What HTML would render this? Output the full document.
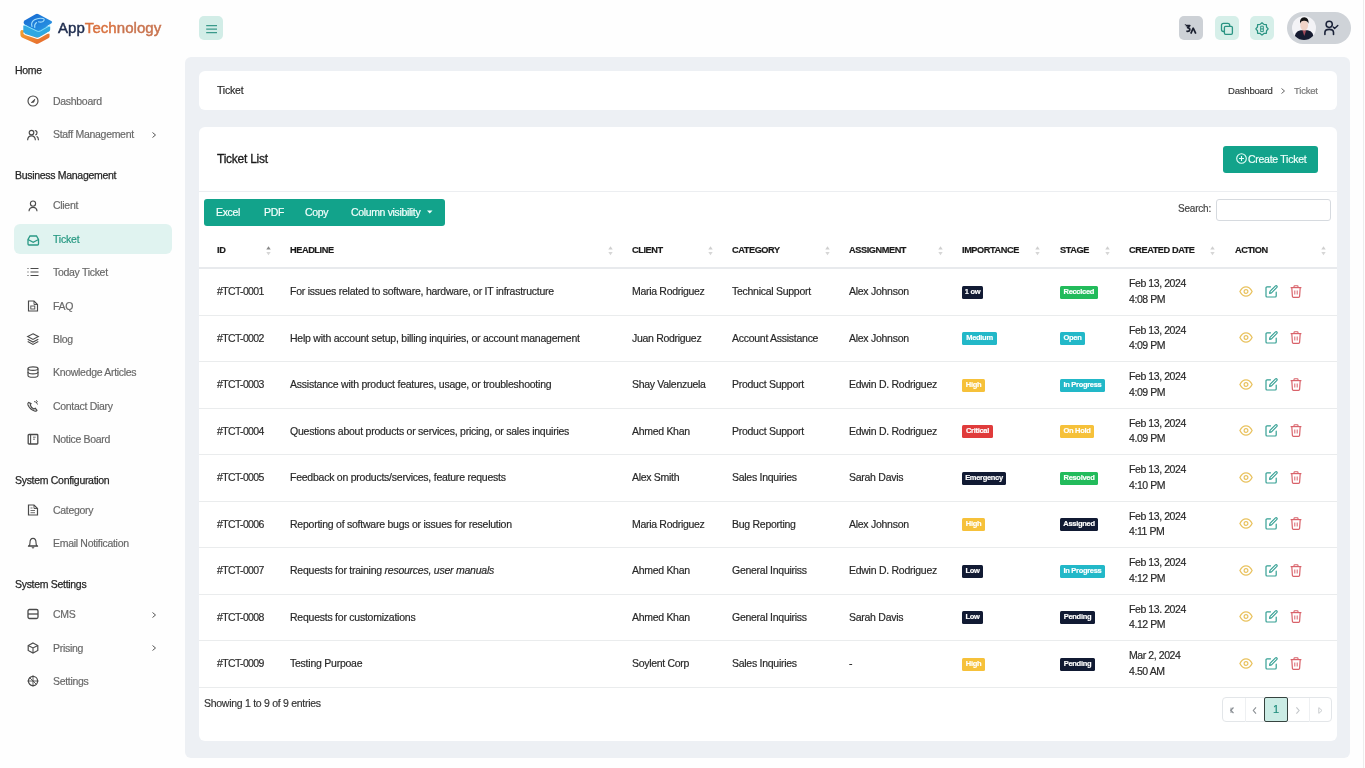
<!DOCTYPE html>
<html><head><meta charset="utf-8"><style>
*{box-sizing:border-box;margin:0;padding:0}
html,body{width:1365px;height:768px;overflow:hidden;background:#fefefe;font-family:"Liberation Sans",sans-serif;color:#333}
.abs{position:absolute}
.t{position:absolute;white-space:nowrap;will-change:transform;-webkit-text-stroke:0.18px currentColor}
svg{position:absolute;overflow:visible}
</style></head><body>
<svg style="left:0;top:0" width="60" height="50" viewBox="0 0 60 50">
  <defs>
   <linearGradient id="og" x1="0" y1="0" x2="1" y2="1"><stop offset="0" stop-color="#f3a531"/><stop offset="1" stop-color="#e5622e"/></linearGradient>
   <linearGradient id="bg1" x1="0" y1="0" x2="1" y2="1"><stop offset="0" stop-color="#1565d0"/><stop offset="1" stop-color="#2a9be6"/></linearGradient>
  </defs>
  <path d="M21.5 30 Q20 30.8 20.3 32.5 L20.5 35.5 Q20.7 36.8 22 37.4 L35.5 43.6 Q37 44.2 38.5 43.5 L48.3 38.3 Q49.6 37.6 49.6 36.2 L49.5 33.8 Z" fill="url(#og)"/>
  <path d="M23.3 25.5 L23.3 32 Q23.4 33.5 24.8 34.2 L36.5 37.6 Q38 38 39.4 37.2 L48.8 31.8 Q50.2 31 50.2 29.5 L50.2 26.5 Z" fill="#2fa8e2"/>
  <path d="M23.6 32.6 Q24 33.8 25.2 34.4 L36.5 38.2 Q38 38.6 39.4 37.8 L49 32.2" fill="none" stroke="#ffffff" stroke-width="1.1"/>
  <path d="M24.6 20.5 L35.5 14.2 Q37 13.4 38.6 14.2 L51.3 21 Q53 22 51.5 23.2 L40.5 30.3 Q38.8 31.3 37 30.6 L24.6 24.5 Q22.6 22.2 24.6 20.5 Z" fill="url(#bg1)"/>
  <path d="M24 24.8 L37.2 31.2 Q38.8 31.8 40.3 31 L50.2 25.5" fill="none" stroke="#8fe3ff" stroke-width="0.9"/>
  <path d="M32 26.5 Q30.5 22.5 34.5 19.8 Q38.5 17.5 43 18.5 Q45.5 19.5 43 21.5 Q41 22.5 38.5 21.8 M34.8 27.5 Q34 24.5 36.5 22.5" fill="none" stroke="#9fdcfb" stroke-width="1.1" stroke-linecap="round"/>
</svg>
<div class="t" style="left:57.5px;top:16px;font-size:15px;line-height:24px;font-weight:normal;letter-spacing:0.05px;-webkit-text-stroke:0.45px currentColor"><span style="color:#1e2c4e">App</span><span style="color:#d8713f">Tech</span><span style="color:#c9744f">nology</span></div>
<div class="abs" style="left:199px;top:16px;width:24px;height:24px;border-radius:5px;background:#d2ede7"></div>
<svg style="left:199px;top:16px" width="24" height="24"><path d="M7.2 9.6h10.8M7.2 13.1h10.8M7.2 16.6h10.8" stroke="#3a9a8b" stroke-width="1.35"/></svg>
<div class="abs" style="left:1179px;top:16px;width:24px;height:24px;border-radius:5px;background:#cdd1d6"></div>
<svg style="left:1179px;top:16px" width="24" height="24"><path d="M6.8 9.6 L10.8 9.6 L8.6 11.6 Q11 12 10.8 14 Q10.4 15.7 7.4 15.2" fill="none" stroke="#1a1f2e" stroke-width="1.7" stroke-linejoin="round"/><path d="M5.8 8.7 h1.2" stroke="#1a1f2e" stroke-width="0.8"/><path d="M11.8 17.6 L14.2 12.2 L16.8 17.6" fill="none" stroke="#1a1f2e" stroke-width="1.7" stroke-linejoin="round"/></svg>
<div class="abs" style="left:1215px;top:16px;width:24px;height:24px;border-radius:5px;background:#d6efe9"></div>
<svg style="left:1215px;top:16px" width="24" height="24"><rect x="6.5" y="7.3" width="8.2" height="8.2" rx="2" fill="none" stroke="#2a9483" stroke-width="1.3"/><rect x="9.4" y="10.3" width="8" height="8" rx="1.2" fill="#d6efe9" stroke="#2a9483" stroke-width="1.3"/></svg>
<div class="abs" style="left:1250px;top:16px;width:24px;height:24px;border-radius:5px;background:#d6efe9"></div>
<svg style="left:1250px;top:16px" width="24" height="24"><path d="M12.00 6.70 L13.88 8.37 L16.38 8.52 L16.53 11.02 L18.20 12.90 L16.53 14.78 L16.38 17.28 L13.88 17.43 L12.00 19.10 L10.12 17.43 L7.62 17.28 L7.47 14.78 L5.80 12.90 L7.47 11.02 L7.62 8.52 L10.12 8.37Z" fill="none" stroke="#2a9483" stroke-width="1.25" stroke-linejoin="round"/><path d="M10.7 10.2h2.6v5.4h-2.6z M10.7 12.9h2.6" fill="none" stroke="#2a9483" stroke-width="1"/></svg>
<div class="abs" style="left:1286.5px;top:12px;width:64.5px;height:32px;border-radius:16px;background:#cfd3d8"></div>
<div class="abs" style="left:1291.5px;top:16.3px;width:24px;height:24px;border-radius:50%;background:#f3f3f6;overflow:hidden"><svg style="left:0;top:0" width="24" height="24"><path d="M2.6 24 Q2 15.6 8.6 14.3 L15.8 14.3 Q22.2 15.6 21.8 24 Z" fill="#161b30"/><path d="M10.4 14.3 L12.3 20 L14.2 14.3Z" fill="#a44a5a"/><ellipse cx="12.2" cy="9.3" rx="3.9" ry="5.2" fill="#efd3c6"/><path d="M8 7.8 Q7.4 1.3 12.2 1.3 Q17 1.3 16.5 7.8 Q15.6 4.6 12.2 4.8 Q8.9 4.6 8 7.8Z" fill="#141414"/></svg></div>
<svg style="left:1322px;top:19px" width="18" height="18"><circle cx="7.2" cy="5.3" r="3.1" fill="none" stroke="#1a2238" stroke-width="1.5"/><path d="M2.9 15.4 V13.6 Q2.9 10.4 7.2 10.4 Q11.5 10.4 11.5 13.6 V15.4" fill="none" stroke="#1a2238" stroke-width="1.6" stroke-linecap="round"/><path d="M11.2 8.1 L12.6 9.4 L15.8 6.4" fill="none" stroke="#1a2238" stroke-width="1.4" stroke-linecap="round" stroke-linejoin="round"/></svg>
<div class="t" style="left:15px;top:65.14px;font-size:10.5px;line-height:10.5px;color:#262626;font-weight:normal;letter-spacing:-0.3px;-webkit-text-stroke:0.25px #262626;">Home</div>
<svg style="left:27px;top:94.9px" width="12" height="12" viewBox="0 0 12 12"><circle cx="6" cy="6" r="5" fill="none" stroke="#4a4a4a" stroke-width="1.15"/><path d="M4.3 7.5 L7.8 4.2 L6.8 7.2 Z" fill="#4a4a4a" stroke="#4a4a4a" stroke-width="0.8"/></svg>
<div class="t" style="left:53px;top:95.84px;font-size:10.5px;line-height:10.5px;color:#686868;font-weight:normal;letter-spacing:-0.3px;">Dashboard</div>
<svg style="left:27px;top:128.5px" width="12" height="12" viewBox="0 0 12 12"><circle cx="4.5" cy="3.6" r="2.3" fill="none" stroke="#4a4a4a" stroke-width="1.15"/><path d="M0.6 11.2 Q0.8 6.8 4.5 6.8 Q8.2 6.8 8.4 11.2" fill="none" stroke="#4a4a4a" stroke-width="1.15"/><path d="M7.8 1.5 Q10 1.6 10 3.7 Q10 5.6 8.2 6" fill="none" stroke="#4a4a4a" stroke-width="1.15"/><path d="M9.6 7.2 Q11.4 8 11.5 11.2" fill="none" stroke="#4a4a4a" stroke-width="1.15"/></svg>
<div class="t" style="left:53px;top:129.44px;font-size:10.5px;line-height:10.5px;color:#686868;font-weight:normal;letter-spacing:-0.3px;">Staff Management</div>
<svg style="left:151px;top:132px" width="6" height="6"><path d="M1.5 0.5 L4.5 3 L1.5 5.5" fill="none" stroke="#555" stroke-width="1"/></svg>
<div class="t" style="left:15px;top:169.74px;font-size:10.5px;line-height:10.5px;color:#262626;font-weight:normal;letter-spacing:-0.3px;-webkit-text-stroke:0.25px #262626;">Business Management</div>
<svg style="left:27px;top:199.5px" width="12" height="12" viewBox="0 0 12 12"><circle cx="6" cy="3.6" r="2.6" fill="none" stroke="#4a4a4a" stroke-width="1.15"/><path d="M2 11.3 Q2.2 7.3 6 7.3 Q9.8 7.3 10 11.3" fill="none" stroke="#4a4a4a" stroke-width="1.15"/></svg>
<div class="t" style="left:53px;top:200.44px;font-size:10.5px;line-height:10.5px;color:#686868;font-weight:normal;letter-spacing:-0.3px;">Client</div>
<div class="abs" style="left:14px;top:224px;width:158px;height:30px;border-radius:6px;background:#e0f3f0"></div>
<svg style="left:27px;top:233.5px" width="12" height="12" viewBox="0 0 12 12"><path d="M1 5.5 L1 10 Q1 11 2 11 L10.5 11 Q11.5 11 11.5 10 L11.5 5.5 L9.5 2 L3 2 Z" fill="none" stroke="#2a9985" stroke-width="1.3"/><path d="M1 5.5 L6.2 8.3 L11.5 5.5" fill="none" stroke="#2a9985" stroke-width="1.3"/></svg>
<div class="t" style="left:53px;top:233.94px;font-size:10.5px;line-height:10.5px;color:#21967f;font-weight:normal;letter-spacing:-0.2px;">Ticket</div>
<svg style="left:27px;top:266.2px" width="12" height="12" viewBox="0 0 12 12"><path d="M3.5 2.5h8M3.5 6h8M3.5 9.5h8" stroke="#4a4a4a" stroke-width="1.15"/><path d="M0.5 2.5h1M0.5 6h1M0.5 9.5h1" stroke="#4a4a4a" stroke-width="1.15"/></svg>
<div class="t" style="left:53px;top:267.14px;font-size:10.5px;line-height:10.5px;color:#686868;font-weight:normal;letter-spacing:-0.3px;">Today Ticket</div>
<svg style="left:27px;top:299.7px" width="12" height="12" viewBox="0 0 12 12"><path d="M1.5 1 L7 1 L10.5 4.5 L10.5 11 L1.5 11 Z" fill="none" stroke="#4a4a4a" stroke-width="1.15"/><path d="M7 1 L7 4.5 L10.5 4.5" fill="none" stroke="#4a4a4a" stroke-width="0.9"/><rect x="3.8" y="6" width="4" height="3" fill="none" stroke="#4a4a4a" stroke-width="0.9"/></svg>
<div class="t" style="left:53px;top:300.64px;font-size:10.5px;line-height:10.5px;color:#686868;font-weight:normal;letter-spacing:-0.3px;">FAQ</div>
<svg style="left:27px;top:333.2px" width="12" height="12" viewBox="0 0 12 12"><path d="M6 0.8 L11.3 3.6 L6 6.4 L0.7 3.6 Z" fill="none" stroke="#4a4a4a" stroke-width="1.15"/><path d="M0.7 6.2 L6 9 L11.3 6.2" fill="none" stroke="#4a4a4a" stroke-width="1.15"/><path d="M0.7 8.6 L6 11.4 L11.3 8.6" fill="none" stroke="#4a4a4a" stroke-width="1.15"/></svg>
<div class="t" style="left:53px;top:334.14px;font-size:10.5px;line-height:10.5px;color:#686868;font-weight:normal;letter-spacing:-0.3px;">Blog</div>
<svg style="left:27px;top:366px" width="12" height="12" viewBox="0 0 12 12"><ellipse cx="6" cy="2.6" rx="5" ry="1.8" fill="none" stroke="#4a4a4a" stroke-width="1.15"/><path d="M1 2.6 V9.4 Q1 11.2 6 11.2 Q11 11.2 11 9.4 V2.6" fill="none" stroke="#4a4a4a" stroke-width="1.15"/><path d="M1 6 Q1 7.8 6 7.8 Q11 7.8 11 6" fill="none" stroke="#4a4a4a" stroke-width="1.15"/></svg>
<div class="t" style="left:53px;top:366.94px;font-size:10.5px;line-height:10.5px;color:#686868;font-weight:normal;letter-spacing:-0.3px;">Knowledge Articles</div>
<svg style="left:27px;top:399.9px" width="12" height="12" viewBox="0 0 12 12"><path d="M1.5 2.5 Q0.5 3 1 5 Q3 9.5 7.5 11 Q9.5 11.5 10 10.3 L8.3 8.3 L6.8 9 Q4 7.5 3.2 5 L4 3.6 Z" fill="none" stroke="#4a4a4a" stroke-width="1.15"/><path d="M7 1.5 Q10 1.5 10.5 4.5 M9 0.3 L10.5 1.6 L9 2.9" fill="none" stroke="#4a4a4a" stroke-width="0.9"/></svg>
<div class="t" style="left:53px;top:400.84px;font-size:10.5px;line-height:10.5px;color:#686868;font-weight:normal;letter-spacing:-0.3px;">Contact Diary</div>
<svg style="left:27px;top:433px" width="12" height="12" viewBox="0 0 12 12"><rect x="1.2" y="1.5" width="9.6" height="9.5" rx="0.8" fill="none" stroke="#4a4a4a" stroke-width="1.3"/><path d="M3.6 1.5 V11" stroke="#4a4a4a" stroke-width="1.1"/><path d="M6 4.2 h2.7 M6 6.2 h2" stroke="#4a4a4a" stroke-width="0.8"/></svg>
<div class="t" style="left:53px;top:433.94px;font-size:10.5px;line-height:10.5px;color:#686868;font-weight:normal;letter-spacing:-0.3px;">Notice Board</div>
<div class="t" style="left:15px;top:475.14px;font-size:10.5px;line-height:10.5px;color:#262626;font-weight:normal;letter-spacing:-0.3px;-webkit-text-stroke:0.25px #262626;">System Configuration</div>
<svg style="left:27px;top:504px" width="12" height="12" viewBox="0 0 12 12"><path d="M1.5 1 L7 1 L10.5 4.5 L10.5 11 L1.5 11 Z" fill="none" stroke="#4a4a4a" stroke-width="1.2"/><path d="M7 1 L7 4.5 L10.5 4.5" fill="none" stroke="#4a4a4a" stroke-width="0.9"/><path d="M3.5 4h2M3.5 6.5h4.5M3.5 8.7h4.5" stroke="#4a4a4a" stroke-width="0.8"/></svg>
<div class="t" style="left:53px;top:504.94px;font-size:10.5px;line-height:10.5px;color:#686868;font-weight:normal;letter-spacing:-0.3px;">Category</div>
<svg style="left:27px;top:536.8px" width="12" height="12" viewBox="0 0 12 12"><path d="M2 9 Q3 8 3 5.5 Q3 1.3 6 1.3 Q9 1.3 9 5.5 Q9 8 10 9 Z" fill="none" stroke="#4a4a4a" stroke-width="1.15"/><path d="M1 9h10" stroke="#4a4a4a" stroke-width="1.15"/><path d="M5 10.2 Q6 11.8 7 10.2" fill="none" stroke="#4a4a4a" stroke-width="1.15"/></svg>
<div class="t" style="left:53px;top:537.74px;font-size:10.5px;line-height:10.5px;color:#686868;font-weight:normal;letter-spacing:-0.3px;">Email Notification</div>
<div class="t" style="left:15px;top:578.64px;font-size:10.5px;line-height:10.5px;color:#262626;font-weight:normal;letter-spacing:-0.3px;-webkit-text-stroke:0.25px #262626;">System Settings</div>
<svg style="left:27px;top:608.4px" width="12" height="12" viewBox="0 0 12 12"><rect x="1" y="1.5" width="10" height="9" rx="1.5" fill="none" stroke="#4a4a4a" stroke-width="1.3"/><path d="M1 6h10" stroke="#4a4a4a" stroke-width="1.3"/></svg>
<div class="t" style="left:53px;top:609.34px;font-size:10.5px;line-height:10.5px;color:#686868;font-weight:normal;letter-spacing:-0.3px;">CMS</div>
<svg style="left:151px;top:611.5px" width="6" height="6"><path d="M1.5 0.5 L4.5 3 L1.5 5.5" fill="none" stroke="#555" stroke-width="1"/></svg>
<svg style="left:27px;top:641.9px" width="12" height="12" viewBox="0 0 12 12"><path d="M6 1 L10.8 3.5 L10.8 8.5 L6 11 L1.2 8.5 L1.2 3.5 Z" fill="none" stroke="#4a4a4a" stroke-width="1.2"/><path d="M1.2 3.5 L6 6 L10.8 3.5 M6 6 V11" fill="none" stroke="#4a4a4a" stroke-width="1.1"/></svg>
<div class="t" style="left:53px;top:642.84px;font-size:10.5px;line-height:10.5px;color:#686868;font-weight:normal;letter-spacing:-0.3px;">Prising</div>
<svg style="left:151px;top:645px" width="6" height="6"><path d="M1.5 0.5 L4.5 3 L1.5 5.5" fill="none" stroke="#555" stroke-width="1"/></svg>
<svg style="left:27px;top:675px" width="12" height="12" viewBox="0 0 12 12"><circle cx="6" cy="6" r="4.6" fill="none" stroke="#4a4a4a" stroke-width="1.2"/><path d="M6 1.4 V10.6 M1.4 6 H10.6 M2.8 2.8 L9.2 9.2" stroke="#4a4a4a" stroke-width="0.9"/><path d="M6 0.5v1.3M6 10.2v1.3M0.5 6h1.3M10.2 6h1.3" stroke="#4a4a4a" stroke-width="1.2"/></svg>
<div class="t" style="left:53px;top:675.94px;font-size:10.5px;line-height:10.5px;color:#686868;font-weight:normal;letter-spacing:-0.3px;">Settings</div>
<div class="abs" style="left:185px;top:57px;width:1165px;height:701px;border-radius:6px;background:#edf0f4"></div>
<div class="abs" style="left:199px;top:71px;width:1138px;height:39px;border-radius:6px;background:#fff"></div>
<div class="t" style="left:217px;top:85.24px;font-size:10.5px;line-height:10.5px;color:#242424;font-weight:normal;letter-spacing:-0.2px;-webkit-text-stroke:0.15px #242424;">Ticket</div>
<div class="t" style="left:1227.5px;top:86.02px;font-size:9.5px;line-height:9.5px;color:#3a3a3a;font-weight:normal;letter-spacing:-0.2px;">Dashboard</div>
<svg style="left:1280px;top:87.5px" width="6" height="6"><path d="M1.5 0.5 L4.5 3 L1.5 5.5" fill="none" stroke="#666" stroke-width="1"/></svg>
<div class="t" style="left:1294px;top:86.02px;font-size:9.5px;line-height:9.5px;color:#777;font-weight:normal;letter-spacing:-0.2px;">Ticket</div>
<div class="abs" style="left:199px;top:127px;width:1138px;height:614px;border-radius:6px;background:#fff"></div>
<div class="t" style="left:217px;top:152.52px;font-size:12px;line-height:12px;color:#1a1a1a;font-weight:normal;letter-spacing:-0.25px;-webkit-text-stroke:0.3px #1a1a1a;">Ticket List</div>
<div class="abs" style="left:1223px;top:146px;width:95px;height:27px;border-radius:3px;background:#12a38b"></div>
<svg style="left:1236px;top:153px" width="11" height="11"><circle cx="5.5" cy="5.5" r="4.8" fill="none" stroke="#e6fff9" stroke-width="1.1"/><path d="M5.5 3v5M3 5.5h5" stroke="#e6fff9" stroke-width="1.1"/></svg>
<div class="t" style="left:1248px;top:153.54px;font-size:10.5px;line-height:10.5px;color:#f0fffb;font-weight:normal;letter-spacing:-0.27px;-webkit-text-stroke:0.2px #f0fffb;">Create Ticket</div>
<div class="abs" style="left:199px;top:191px;width:1138px;height:1px;background:#eceef1"></div>
<div class="abs" style="left:204px;top:199px;width:241px;height:27px;border-radius:3px;background:#12a38b"></div>
<div class="t" style="left:216px;top:206.74px;font-size:10.5px;line-height:10.5px;color:#f4fffc;font-weight:normal;letter-spacing:-0.35px;-webkit-text-stroke:0.2px #f4fffc;">Excel</div>
<div class="t" style="left:263.5px;top:206.74px;font-size:10.5px;line-height:10.5px;color:#f4fffc;font-weight:normal;letter-spacing:-0.35px;-webkit-text-stroke:0.2px #f4fffc;">PDF</div>
<div class="t" style="left:304.5px;top:206.74px;font-size:10.5px;line-height:10.5px;color:#f4fffc;font-weight:normal;letter-spacing:-0.35px;-webkit-text-stroke:0.2px #f4fffc;">Copy</div>
<div class="t" style="left:351px;top:206.74px;font-size:10.5px;line-height:10.5px;color:#f4fffc;font-weight:normal;letter-spacing:-0.35px;-webkit-text-stroke:0.2px #f4fffc;">Column visibility</div>
<svg style="left:427px;top:210px" width="6" height="4"><path d="M0 0.5h5.5L2.75 3.5z" fill="#f2fffc"/></svg>
<div class="t" style="left:1177.7px;top:203.98px;font-size:10px;line-height:10px;color:#444;font-weight:normal;letter-spacing:-0.2px;">Search:</div>
<div class="abs" style="left:1216px;top:199px;width:115px;height:22px;border-radius:3px;border:1px solid #d6dadf;background:#fff"></div>
<div class="t" style="left:217px;top:245.67px;font-size:9.2px;line-height:9.2px;color:#1b1b1b;font-weight:bold;letter-spacing:-0.42px;">ID</div>
<svg style="left:265.5px;top:245.5px" width="5" height="10"><path d="M0.3 3.6 L2.5 0.3 L4.7 3.6Z" fill="#888"/><path d="M0.3 6 L2.5 9.3 L4.7 6Z" fill="#d6d6d6"/></svg>
<div class="t" style="left:290px;top:245.67px;font-size:9.2px;line-height:9.2px;color:#1b1b1b;font-weight:bold;letter-spacing:-0.42px;">HEADLINE</div>
<svg style="left:608.0px;top:245.5px" width="5" height="10"><path d="M0.3 3.6 L2.5 0.3 L4.7 3.6Z" fill="#cfcfcf"/><path d="M0.3 6 L2.5 9.3 L4.7 6Z" fill="#d6d6d6"/></svg>
<div class="t" style="left:632.3px;top:245.67px;font-size:9.2px;line-height:9.2px;color:#1b1b1b;font-weight:bold;letter-spacing:-0.42px;">CLIENT</div>
<svg style="left:707.5px;top:245.5px" width="5" height="10"><path d="M0.3 3.6 L2.5 0.3 L4.7 3.6Z" fill="#cfcfcf"/><path d="M0.3 6 L2.5 9.3 L4.7 6Z" fill="#d6d6d6"/></svg>
<div class="t" style="left:731.7px;top:245.67px;font-size:9.2px;line-height:9.2px;color:#1b1b1b;font-weight:bold;letter-spacing:-0.42px;">CATEGORY</div>
<svg style="left:824.5px;top:245.5px" width="5" height="10"><path d="M0.3 3.6 L2.5 0.3 L4.7 3.6Z" fill="#cfcfcf"/><path d="M0.3 6 L2.5 9.3 L4.7 6Z" fill="#d6d6d6"/></svg>
<div class="t" style="left:849px;top:245.67px;font-size:9.2px;line-height:9.2px;color:#1b1b1b;font-weight:bold;letter-spacing:-0.42px;">ASSIGNMENT</div>
<svg style="left:937.5px;top:245.5px" width="5" height="10"><path d="M0.3 3.6 L2.5 0.3 L4.7 3.6Z" fill="#cfcfcf"/><path d="M0.3 6 L2.5 9.3 L4.7 6Z" fill="#d6d6d6"/></svg>
<div class="t" style="left:962px;top:245.67px;font-size:9.2px;line-height:9.2px;color:#1b1b1b;font-weight:bold;letter-spacing:-0.42px;">IMPORTANCE</div>
<svg style="left:1035.0px;top:245.5px" width="5" height="10"><path d="M0.3 3.6 L2.5 0.3 L4.7 3.6Z" fill="#cfcfcf"/><path d="M0.3 6 L2.5 9.3 L4.7 6Z" fill="#d6d6d6"/></svg>
<div class="t" style="left:1060px;top:245.67px;font-size:9.2px;line-height:9.2px;color:#1b1b1b;font-weight:bold;letter-spacing:-0.42px;">STAGE</div>
<svg style="left:1105.0px;top:245.5px" width="5" height="10"><path d="M0.3 3.6 L2.5 0.3 L4.7 3.6Z" fill="#cfcfcf"/><path d="M0.3 6 L2.5 9.3 L4.7 6Z" fill="#d6d6d6"/></svg>
<div class="t" style="left:1129.4px;top:245.67px;font-size:9.2px;line-height:9.2px;color:#1b1b1b;font-weight:bold;letter-spacing:-0.42px;">CREATED DATE</div>
<svg style="left:1210.0px;top:245.5px" width="5" height="10"><path d="M0.3 3.6 L2.5 0.3 L4.7 3.6Z" fill="#cfcfcf"/><path d="M0.3 6 L2.5 9.3 L4.7 6Z" fill="#d6d6d6"/></svg>
<div class="t" style="left:1234.5px;top:245.67px;font-size:9.2px;line-height:9.2px;color:#1b1b1b;font-weight:bold;letter-spacing:-0.42px;">ACTION</div>
<svg style="left:1320.5px;top:245.5px" width="5" height="10"><path d="M0.3 3.6 L2.5 0.3 L4.7 3.6Z" fill="#cfcfcf"/><path d="M0.3 6 L2.5 9.3 L4.7 6Z" fill="#d6d6d6"/></svg>
<div class="abs" style="left:199px;top:267px;width:1138px;height:2px;background:#e8eaed"></div>
<div class="t" style="left:217px;top:286.19px;font-size:10.5px;line-height:10.5px;color:#2b2b2b;font-weight:normal;letter-spacing:-0.65px;">#TCT-0001</div>
<div class="t" style="left:290px;top:286.19px;font-size:10.5px;line-height:10.5px;color:#282828;font-weight:normal;letter-spacing:-0.24px;">For issues related to software, hardware, or IT infrastructure</div>
<div class="t" style="left:632.3px;top:286.19px;font-size:10.5px;line-height:10.5px;color:#282828;font-weight:normal;letter-spacing:-0.3px;">Maria Rodriguez</div>
<div class="t" style="left:731.7px;top:286.19px;font-size:10.5px;line-height:10.5px;color:#282828;font-weight:normal;letter-spacing:-0.27px;">Technical Support</div>
<div class="t" style="left:849px;top:286.19px;font-size:10.5px;line-height:10.5px;color:#282828;font-weight:normal;letter-spacing:-0.27px;">Alex Johnson</div>
<div class="t" style="left:962px;top:285.65px;width:21px;height:12.5px;border-radius:1.5px;background:#111a33;color:#fff;font-size:7.5px;line-height:12.5px;font-weight:bold;text-align:center;letter-spacing:-0.3px;overflow:hidden">1 ow</div>
<div class="t" style="left:1060px;top:285.65px;width:37.6px;height:12.5px;border-radius:1.5px;background:#22bb5b;color:#fff;font-size:7.5px;line-height:12.5px;font-weight:bold;text-align:center;letter-spacing:-0.3px;overflow:hidden">Recclced</div>
<div class="t" style="left:1129.4px;top:278.44px;font-size:10.5px;line-height:10.5px;color:#282828;font-weight:normal;letter-spacing:-0.42px;">Feb 13, 2024</div>
<div class="t" style="left:1129.4px;top:293.94px;font-size:10.5px;line-height:10.5px;color:#282828;font-weight:normal;letter-spacing:-0.42px;">4:08 PM</div>
<svg style="left:1238.5px;top:285.75px" width="14" height="11" viewBox="0 0 14 11"><path d="M0.9 5.5 Q3.2 0.9 7 0.9 Q10.8 0.9 13.1 5.5 Q10.8 10.1 7 10.1 Q3.2 10.1 0.9 5.5Z" fill="none" stroke="#e9c25e" stroke-width="1.25"/><circle cx="7" cy="5.5" r="1.9" fill="none" stroke="#e9c25e" stroke-width="1.2"/></svg>
<svg style="left:1265px;top:284.75px" width="13" height="13" viewBox="0 0 13 13"><path d="M5.5 1.8 H2 Q1 1.8 1 2.8 V11 Q1 12 2 12 H10.2 Q11.2 12 11.2 11 V7.2" fill="none" stroke="#35a094" stroke-width="1.2" stroke-linecap="round"/><path d="M4.6 8.4 L5 6.3 L10.5 0.9 Q11.2 0.3 11.9 1 Q12.5 1.7 11.9 2.4 L6.5 7.9 Z" fill="none" stroke="#35a094" stroke-width="1.15" stroke-linejoin="round"/></svg>
<svg style="left:1290.3px;top:284.75px" width="12" height="13" viewBox="0 0 12 13"><path d="M0.6 2.6 H11.4" stroke="#d9626a" stroke-width="1.2"/><path d="M4 2.4 V1.4 Q4 0.7 4.7 0.7 H7.3 Q8 0.7 8 1.4 V2.4" fill="none" stroke="#d9626a" stroke-width="1.1"/><path d="M1.8 2.8 L2.4 11.4 Q2.5 12.3 3.4 12.3 H8.6 Q9.5 12.3 9.6 11.4 L10.2 2.8" fill="none" stroke="#d9626a" stroke-width="1.2"/><path d="M4.8 5.5 V9.5 M7.2 5.5 V9.5" stroke="#d9626a" stroke-width="1"/></svg>
<div class="abs" style="left:199px;top:314.5px;width:1138px;height:1px;background:#eaeced"></div>
<div class="t" style="left:217px;top:332.69px;font-size:10.5px;line-height:10.5px;color:#2b2b2b;font-weight:normal;letter-spacing:-0.65px;">#TCT-0002</div>
<div class="t" style="left:290px;top:332.69px;font-size:10.5px;line-height:10.5px;color:#282828;font-weight:normal;letter-spacing:-0.24px;">Help with account setup, billing inquiries, or account management</div>
<div class="t" style="left:632.3px;top:332.69px;font-size:10.5px;line-height:10.5px;color:#282828;font-weight:normal;letter-spacing:-0.3px;">Juan Rodriguez</div>
<div class="t" style="left:731.7px;top:332.69px;font-size:10.5px;line-height:10.5px;color:#282828;font-weight:normal;letter-spacing:-0.27px;">Account Assistance</div>
<div class="t" style="left:849px;top:332.69px;font-size:10.5px;line-height:10.5px;color:#282828;font-weight:normal;letter-spacing:-0.27px;">Alex Johnson</div>
<div class="t" style="left:962px;top:332.15px;width:35px;height:12.5px;border-radius:1.5px;background:#22b8c8;color:#fff;font-size:7.5px;line-height:12.5px;font-weight:bold;text-align:center;letter-spacing:-0.3px;overflow:hidden">Medium</div>
<div class="t" style="left:1060px;top:332.15px;width:25px;height:12.5px;border-radius:1.5px;background:#22b8c8;color:#fff;font-size:7.5px;line-height:12.5px;font-weight:bold;text-align:center;letter-spacing:-0.3px;overflow:hidden">Open</div>
<div class="t" style="left:1129.4px;top:324.94px;font-size:10.5px;line-height:10.5px;color:#282828;font-weight:normal;letter-spacing:-0.42px;">Feb 13, 2024</div>
<div class="t" style="left:1129.4px;top:340.44px;font-size:10.5px;line-height:10.5px;color:#282828;font-weight:normal;letter-spacing:-0.42px;">4:09 PM</div>
<svg style="left:1238.5px;top:332.25px" width="14" height="11" viewBox="0 0 14 11"><path d="M0.9 5.5 Q3.2 0.9 7 0.9 Q10.8 0.9 13.1 5.5 Q10.8 10.1 7 10.1 Q3.2 10.1 0.9 5.5Z" fill="none" stroke="#e9c25e" stroke-width="1.25"/><circle cx="7" cy="5.5" r="1.9" fill="none" stroke="#e9c25e" stroke-width="1.2"/></svg>
<svg style="left:1265px;top:331.25px" width="13" height="13" viewBox="0 0 13 13"><path d="M5.5 1.8 H2 Q1 1.8 1 2.8 V11 Q1 12 2 12 H10.2 Q11.2 12 11.2 11 V7.2" fill="none" stroke="#35a094" stroke-width="1.2" stroke-linecap="round"/><path d="M4.6 8.4 L5 6.3 L10.5 0.9 Q11.2 0.3 11.9 1 Q12.5 1.7 11.9 2.4 L6.5 7.9 Z" fill="none" stroke="#35a094" stroke-width="1.15" stroke-linejoin="round"/></svg>
<svg style="left:1290.3px;top:331.25px" width="12" height="13" viewBox="0 0 12 13"><path d="M0.6 2.6 H11.4" stroke="#d9626a" stroke-width="1.2"/><path d="M4 2.4 V1.4 Q4 0.7 4.7 0.7 H7.3 Q8 0.7 8 1.4 V2.4" fill="none" stroke="#d9626a" stroke-width="1.1"/><path d="M1.8 2.8 L2.4 11.4 Q2.5 12.3 3.4 12.3 H8.6 Q9.5 12.3 9.6 11.4 L10.2 2.8" fill="none" stroke="#d9626a" stroke-width="1.2"/><path d="M4.8 5.5 V9.5 M7.2 5.5 V9.5" stroke="#d9626a" stroke-width="1"/></svg>
<div class="abs" style="left:199px;top:361.0px;width:1138px;height:1px;background:#eaeced"></div>
<div class="t" style="left:217px;top:379.19px;font-size:10.5px;line-height:10.5px;color:#2b2b2b;font-weight:normal;letter-spacing:-0.65px;">#TCT-0003</div>
<div class="t" style="left:290px;top:379.19px;font-size:10.5px;line-height:10.5px;color:#282828;font-weight:normal;letter-spacing:-0.24px;">Assistance with product features, usage, or troubleshooting</div>
<div class="t" style="left:632.3px;top:379.19px;font-size:10.5px;line-height:10.5px;color:#282828;font-weight:normal;letter-spacing:-0.3px;">Shay Valenzuela</div>
<div class="t" style="left:731.7px;top:379.19px;font-size:10.5px;line-height:10.5px;color:#282828;font-weight:normal;letter-spacing:-0.27px;">Product Support</div>
<div class="t" style="left:849px;top:379.19px;font-size:10.5px;line-height:10.5px;color:#282828;font-weight:normal;letter-spacing:-0.27px;">Edwin D. Rodriguez</div>
<div class="t" style="left:962px;top:378.65px;width:23px;height:12.5px;border-radius:1.5px;background:#f6c13a;color:#fff;font-size:7.5px;line-height:12.5px;font-weight:bold;text-align:center;letter-spacing:-0.3px;overflow:hidden">High</div>
<div class="t" style="left:1060px;top:378.65px;width:45px;height:12.5px;border-radius:1.5px;background:#22b8c8;color:#fff;font-size:7.5px;line-height:12.5px;font-weight:bold;text-align:center;letter-spacing:-0.3px;overflow:hidden">In Progress</div>
<div class="t" style="left:1129.4px;top:371.44px;font-size:10.5px;line-height:10.5px;color:#282828;font-weight:normal;letter-spacing:-0.42px;">Feb 13, 2024</div>
<div class="t" style="left:1129.4px;top:386.94px;font-size:10.5px;line-height:10.5px;color:#282828;font-weight:normal;letter-spacing:-0.42px;">4:09 PM</div>
<svg style="left:1238.5px;top:378.75px" width="14" height="11" viewBox="0 0 14 11"><path d="M0.9 5.5 Q3.2 0.9 7 0.9 Q10.8 0.9 13.1 5.5 Q10.8 10.1 7 10.1 Q3.2 10.1 0.9 5.5Z" fill="none" stroke="#e9c25e" stroke-width="1.25"/><circle cx="7" cy="5.5" r="1.9" fill="none" stroke="#e9c25e" stroke-width="1.2"/></svg>
<svg style="left:1265px;top:377.75px" width="13" height="13" viewBox="0 0 13 13"><path d="M5.5 1.8 H2 Q1 1.8 1 2.8 V11 Q1 12 2 12 H10.2 Q11.2 12 11.2 11 V7.2" fill="none" stroke="#35a094" stroke-width="1.2" stroke-linecap="round"/><path d="M4.6 8.4 L5 6.3 L10.5 0.9 Q11.2 0.3 11.9 1 Q12.5 1.7 11.9 2.4 L6.5 7.9 Z" fill="none" stroke="#35a094" stroke-width="1.15" stroke-linejoin="round"/></svg>
<svg style="left:1290.3px;top:377.75px" width="12" height="13" viewBox="0 0 12 13"><path d="M0.6 2.6 H11.4" stroke="#d9626a" stroke-width="1.2"/><path d="M4 2.4 V1.4 Q4 0.7 4.7 0.7 H7.3 Q8 0.7 8 1.4 V2.4" fill="none" stroke="#d9626a" stroke-width="1.1"/><path d="M1.8 2.8 L2.4 11.4 Q2.5 12.3 3.4 12.3 H8.6 Q9.5 12.3 9.6 11.4 L10.2 2.8" fill="none" stroke="#d9626a" stroke-width="1.2"/><path d="M4.8 5.5 V9.5 M7.2 5.5 V9.5" stroke="#d9626a" stroke-width="1"/></svg>
<div class="abs" style="left:199px;top:407.5px;width:1138px;height:1px;background:#eaeced"></div>
<div class="t" style="left:217px;top:425.69px;font-size:10.5px;line-height:10.5px;color:#2b2b2b;font-weight:normal;letter-spacing:-0.65px;">#TCT-0004</div>
<div class="t" style="left:290px;top:425.69px;font-size:10.5px;line-height:10.5px;color:#282828;font-weight:normal;letter-spacing:-0.24px;">Questions about products or services, pricing, or sales inquiries</div>
<div class="t" style="left:632.3px;top:425.69px;font-size:10.5px;line-height:10.5px;color:#282828;font-weight:normal;letter-spacing:-0.3px;">Ahmed Khan</div>
<div class="t" style="left:731.7px;top:425.69px;font-size:10.5px;line-height:10.5px;color:#282828;font-weight:normal;letter-spacing:-0.27px;">Product Support</div>
<div class="t" style="left:849px;top:425.69px;font-size:10.5px;line-height:10.5px;color:#282828;font-weight:normal;letter-spacing:-0.27px;">Edwin D. Rodriguez</div>
<div class="t" style="left:962px;top:425.15px;width:31px;height:12.5px;border-radius:1.5px;background:#e03b3b;color:#fff;font-size:7.5px;line-height:12.5px;font-weight:bold;text-align:center;letter-spacing:-0.3px;overflow:hidden">Critical</div>
<div class="t" style="left:1060px;top:425.15px;width:34px;height:12.5px;border-radius:1.5px;background:#f6c13a;color:#fff;font-size:7.5px;line-height:12.5px;font-weight:bold;text-align:center;letter-spacing:-0.3px;overflow:hidden">On Hold</div>
<div class="t" style="left:1129.4px;top:417.94px;font-size:10.5px;line-height:10.5px;color:#282828;font-weight:normal;letter-spacing:-0.42px;">Feb 13, 2024</div>
<div class="t" style="left:1129.4px;top:433.44px;font-size:10.5px;line-height:10.5px;color:#282828;font-weight:normal;letter-spacing:-0.42px;">4.09 PM</div>
<svg style="left:1238.5px;top:425.25px" width="14" height="11" viewBox="0 0 14 11"><path d="M0.9 5.5 Q3.2 0.9 7 0.9 Q10.8 0.9 13.1 5.5 Q10.8 10.1 7 10.1 Q3.2 10.1 0.9 5.5Z" fill="none" stroke="#e9c25e" stroke-width="1.25"/><circle cx="7" cy="5.5" r="1.9" fill="none" stroke="#e9c25e" stroke-width="1.2"/></svg>
<svg style="left:1265px;top:424.25px" width="13" height="13" viewBox="0 0 13 13"><path d="M5.5 1.8 H2 Q1 1.8 1 2.8 V11 Q1 12 2 12 H10.2 Q11.2 12 11.2 11 V7.2" fill="none" stroke="#35a094" stroke-width="1.2" stroke-linecap="round"/><path d="M4.6 8.4 L5 6.3 L10.5 0.9 Q11.2 0.3 11.9 1 Q12.5 1.7 11.9 2.4 L6.5 7.9 Z" fill="none" stroke="#35a094" stroke-width="1.15" stroke-linejoin="round"/></svg>
<svg style="left:1290.3px;top:424.25px" width="12" height="13" viewBox="0 0 12 13"><path d="M0.6 2.6 H11.4" stroke="#d9626a" stroke-width="1.2"/><path d="M4 2.4 V1.4 Q4 0.7 4.7 0.7 H7.3 Q8 0.7 8 1.4 V2.4" fill="none" stroke="#d9626a" stroke-width="1.1"/><path d="M1.8 2.8 L2.4 11.4 Q2.5 12.3 3.4 12.3 H8.6 Q9.5 12.3 9.6 11.4 L10.2 2.8" fill="none" stroke="#d9626a" stroke-width="1.2"/><path d="M4.8 5.5 V9.5 M7.2 5.5 V9.5" stroke="#d9626a" stroke-width="1"/></svg>
<div class="abs" style="left:199px;top:454.0px;width:1138px;height:1px;background:#eaeced"></div>
<div class="t" style="left:217px;top:472.19px;font-size:10.5px;line-height:10.5px;color:#2b2b2b;font-weight:normal;letter-spacing:-0.65px;">#TCT-0005</div>
<div class="t" style="left:290px;top:472.19px;font-size:10.5px;line-height:10.5px;color:#282828;font-weight:normal;letter-spacing:-0.24px;">Feedback on products/services, feature requests</div>
<div class="t" style="left:632.3px;top:472.19px;font-size:10.5px;line-height:10.5px;color:#282828;font-weight:normal;letter-spacing:-0.3px;">Alex Smith</div>
<div class="t" style="left:731.7px;top:472.19px;font-size:10.5px;line-height:10.5px;color:#282828;font-weight:normal;letter-spacing:-0.27px;">Sales Inquiries</div>
<div class="t" style="left:849px;top:472.19px;font-size:10.5px;line-height:10.5px;color:#282828;font-weight:normal;letter-spacing:-0.27px;">Sarah Davis</div>
<div class="t" style="left:962px;top:471.65px;width:44px;height:12.5px;border-radius:1.5px;background:#111a33;color:#fff;font-size:7.5px;line-height:12.5px;font-weight:bold;text-align:center;letter-spacing:-0.3px;overflow:hidden">Emergency</div>
<div class="t" style="left:1060px;top:471.65px;width:38px;height:12.5px;border-radius:1.5px;background:#22bb5b;color:#fff;font-size:7.5px;line-height:12.5px;font-weight:bold;text-align:center;letter-spacing:-0.3px;overflow:hidden">Resolved</div>
<div class="t" style="left:1129.4px;top:464.44px;font-size:10.5px;line-height:10.5px;color:#282828;font-weight:normal;letter-spacing:-0.42px;">Feb 13, 2024</div>
<div class="t" style="left:1129.4px;top:479.94px;font-size:10.5px;line-height:10.5px;color:#282828;font-weight:normal;letter-spacing:-0.42px;">4:10 PM</div>
<svg style="left:1238.5px;top:471.75px" width="14" height="11" viewBox="0 0 14 11"><path d="M0.9 5.5 Q3.2 0.9 7 0.9 Q10.8 0.9 13.1 5.5 Q10.8 10.1 7 10.1 Q3.2 10.1 0.9 5.5Z" fill="none" stroke="#e9c25e" stroke-width="1.25"/><circle cx="7" cy="5.5" r="1.9" fill="none" stroke="#e9c25e" stroke-width="1.2"/></svg>
<svg style="left:1265px;top:470.75px" width="13" height="13" viewBox="0 0 13 13"><path d="M5.5 1.8 H2 Q1 1.8 1 2.8 V11 Q1 12 2 12 H10.2 Q11.2 12 11.2 11 V7.2" fill="none" stroke="#35a094" stroke-width="1.2" stroke-linecap="round"/><path d="M4.6 8.4 L5 6.3 L10.5 0.9 Q11.2 0.3 11.9 1 Q12.5 1.7 11.9 2.4 L6.5 7.9 Z" fill="none" stroke="#35a094" stroke-width="1.15" stroke-linejoin="round"/></svg>
<svg style="left:1290.3px;top:470.75px" width="12" height="13" viewBox="0 0 12 13"><path d="M0.6 2.6 H11.4" stroke="#d9626a" stroke-width="1.2"/><path d="M4 2.4 V1.4 Q4 0.7 4.7 0.7 H7.3 Q8 0.7 8 1.4 V2.4" fill="none" stroke="#d9626a" stroke-width="1.1"/><path d="M1.8 2.8 L2.4 11.4 Q2.5 12.3 3.4 12.3 H8.6 Q9.5 12.3 9.6 11.4 L10.2 2.8" fill="none" stroke="#d9626a" stroke-width="1.2"/><path d="M4.8 5.5 V9.5 M7.2 5.5 V9.5" stroke="#d9626a" stroke-width="1"/></svg>
<div class="abs" style="left:199px;top:500.5px;width:1138px;height:1px;background:#eaeced"></div>
<div class="t" style="left:217px;top:518.69px;font-size:10.5px;line-height:10.5px;color:#2b2b2b;font-weight:normal;letter-spacing:-0.65px;">#TCT-0006</div>
<div class="t" style="left:290px;top:518.69px;font-size:10.5px;line-height:10.5px;color:#282828;font-weight:normal;letter-spacing:-0.24px;">Reporting of software bugs or issues for reselution</div>
<div class="t" style="left:632.3px;top:518.69px;font-size:10.5px;line-height:10.5px;color:#282828;font-weight:normal;letter-spacing:-0.3px;">Maria Rodriguez</div>
<div class="t" style="left:731.7px;top:518.69px;font-size:10.5px;line-height:10.5px;color:#282828;font-weight:normal;letter-spacing:-0.27px;">Bug Reporting</div>
<div class="t" style="left:849px;top:518.69px;font-size:10.5px;line-height:10.5px;color:#282828;font-weight:normal;letter-spacing:-0.27px;">Alex Johnson</div>
<div class="t" style="left:962px;top:518.15px;width:23px;height:12.5px;border-radius:1.5px;background:#f6c13a;color:#fff;font-size:7.5px;line-height:12.5px;font-weight:bold;text-align:center;letter-spacing:-0.3px;overflow:hidden">High</div>
<div class="t" style="left:1060px;top:518.15px;width:38px;height:12.5px;border-radius:1.5px;background:#111a33;color:#fff;font-size:7.5px;line-height:12.5px;font-weight:bold;text-align:center;letter-spacing:-0.3px;overflow:hidden">Assigned</div>
<div class="t" style="left:1129.4px;top:510.94px;font-size:10.5px;line-height:10.5px;color:#282828;font-weight:normal;letter-spacing:-0.42px;">Feb 13, 2024</div>
<div class="t" style="left:1129.4px;top:526.44px;font-size:10.5px;line-height:10.5px;color:#282828;font-weight:normal;letter-spacing:-0.42px;">4:11 PM</div>
<svg style="left:1238.5px;top:518.25px" width="14" height="11" viewBox="0 0 14 11"><path d="M0.9 5.5 Q3.2 0.9 7 0.9 Q10.8 0.9 13.1 5.5 Q10.8 10.1 7 10.1 Q3.2 10.1 0.9 5.5Z" fill="none" stroke="#e9c25e" stroke-width="1.25"/><circle cx="7" cy="5.5" r="1.9" fill="none" stroke="#e9c25e" stroke-width="1.2"/></svg>
<svg style="left:1265px;top:517.25px" width="13" height="13" viewBox="0 0 13 13"><path d="M5.5 1.8 H2 Q1 1.8 1 2.8 V11 Q1 12 2 12 H10.2 Q11.2 12 11.2 11 V7.2" fill="none" stroke="#35a094" stroke-width="1.2" stroke-linecap="round"/><path d="M4.6 8.4 L5 6.3 L10.5 0.9 Q11.2 0.3 11.9 1 Q12.5 1.7 11.9 2.4 L6.5 7.9 Z" fill="none" stroke="#35a094" stroke-width="1.15" stroke-linejoin="round"/></svg>
<svg style="left:1290.3px;top:517.25px" width="12" height="13" viewBox="0 0 12 13"><path d="M0.6 2.6 H11.4" stroke="#d9626a" stroke-width="1.2"/><path d="M4 2.4 V1.4 Q4 0.7 4.7 0.7 H7.3 Q8 0.7 8 1.4 V2.4" fill="none" stroke="#d9626a" stroke-width="1.1"/><path d="M1.8 2.8 L2.4 11.4 Q2.5 12.3 3.4 12.3 H8.6 Q9.5 12.3 9.6 11.4 L10.2 2.8" fill="none" stroke="#d9626a" stroke-width="1.2"/><path d="M4.8 5.5 V9.5 M7.2 5.5 V9.5" stroke="#d9626a" stroke-width="1"/></svg>
<div class="abs" style="left:199px;top:547.0px;width:1138px;height:1px;background:#eaeced"></div>
<div class="t" style="left:217px;top:565.19px;font-size:10.5px;line-height:10.5px;color:#2b2b2b;font-weight:normal;letter-spacing:-0.65px;">#TCT-0007</div>
<div class="t" style="left:290px;top:565.19px;font-size:10.5px;line-height:10.5px;color:#282828;font-weight:normal;letter-spacing:-0.24px;">Requests for training <i>resources, user manuals</i></div>
<div class="t" style="left:632.3px;top:565.19px;font-size:10.5px;line-height:10.5px;color:#282828;font-weight:normal;letter-spacing:-0.3px;">Ahmed Khan</div>
<div class="t" style="left:731.7px;top:565.19px;font-size:10.5px;line-height:10.5px;color:#282828;font-weight:normal;letter-spacing:-0.27px;">General Inquiriss</div>
<div class="t" style="left:849px;top:565.19px;font-size:10.5px;line-height:10.5px;color:#282828;font-weight:normal;letter-spacing:-0.27px;">Edwin D. Rodriguez</div>
<div class="t" style="left:962px;top:564.65px;width:21px;height:12.5px;border-radius:1.5px;background:#111a33;color:#fff;font-size:7.5px;line-height:12.5px;font-weight:bold;text-align:center;letter-spacing:-0.3px;overflow:hidden">Low</div>
<div class="t" style="left:1060px;top:564.65px;width:45px;height:12.5px;border-radius:1.5px;background:#22b8c8;color:#fff;font-size:7.5px;line-height:12.5px;font-weight:bold;text-align:center;letter-spacing:-0.3px;overflow:hidden">In Progress</div>
<div class="t" style="left:1129.4px;top:557.44px;font-size:10.5px;line-height:10.5px;color:#282828;font-weight:normal;letter-spacing:-0.42px;">Feb 13, 2024</div>
<div class="t" style="left:1129.4px;top:572.94px;font-size:10.5px;line-height:10.5px;color:#282828;font-weight:normal;letter-spacing:-0.42px;">4:12 PM</div>
<svg style="left:1238.5px;top:564.75px" width="14" height="11" viewBox="0 0 14 11"><path d="M0.9 5.5 Q3.2 0.9 7 0.9 Q10.8 0.9 13.1 5.5 Q10.8 10.1 7 10.1 Q3.2 10.1 0.9 5.5Z" fill="none" stroke="#e9c25e" stroke-width="1.25"/><circle cx="7" cy="5.5" r="1.9" fill="none" stroke="#e9c25e" stroke-width="1.2"/></svg>
<svg style="left:1265px;top:563.75px" width="13" height="13" viewBox="0 0 13 13"><path d="M5.5 1.8 H2 Q1 1.8 1 2.8 V11 Q1 12 2 12 H10.2 Q11.2 12 11.2 11 V7.2" fill="none" stroke="#35a094" stroke-width="1.2" stroke-linecap="round"/><path d="M4.6 8.4 L5 6.3 L10.5 0.9 Q11.2 0.3 11.9 1 Q12.5 1.7 11.9 2.4 L6.5 7.9 Z" fill="none" stroke="#35a094" stroke-width="1.15" stroke-linejoin="round"/></svg>
<svg style="left:1290.3px;top:563.75px" width="12" height="13" viewBox="0 0 12 13"><path d="M0.6 2.6 H11.4" stroke="#d9626a" stroke-width="1.2"/><path d="M4 2.4 V1.4 Q4 0.7 4.7 0.7 H7.3 Q8 0.7 8 1.4 V2.4" fill="none" stroke="#d9626a" stroke-width="1.1"/><path d="M1.8 2.8 L2.4 11.4 Q2.5 12.3 3.4 12.3 H8.6 Q9.5 12.3 9.6 11.4 L10.2 2.8" fill="none" stroke="#d9626a" stroke-width="1.2"/><path d="M4.8 5.5 V9.5 M7.2 5.5 V9.5" stroke="#d9626a" stroke-width="1"/></svg>
<div class="abs" style="left:199px;top:593.5px;width:1138px;height:1px;background:#eaeced"></div>
<div class="t" style="left:217px;top:611.69px;font-size:10.5px;line-height:10.5px;color:#2b2b2b;font-weight:normal;letter-spacing:-0.65px;">#TCT-0008</div>
<div class="t" style="left:290px;top:611.69px;font-size:10.5px;line-height:10.5px;color:#282828;font-weight:normal;letter-spacing:-0.24px;">Requests for customizations</div>
<div class="t" style="left:632.3px;top:611.69px;font-size:10.5px;line-height:10.5px;color:#282828;font-weight:normal;letter-spacing:-0.3px;">Ahmed Khan</div>
<div class="t" style="left:731.7px;top:611.69px;font-size:10.5px;line-height:10.5px;color:#282828;font-weight:normal;letter-spacing:-0.27px;">General Inquiriss</div>
<div class="t" style="left:849px;top:611.69px;font-size:10.5px;line-height:10.5px;color:#282828;font-weight:normal;letter-spacing:-0.27px;">Sarah Davis</div>
<div class="t" style="left:962px;top:611.15px;width:21px;height:12.5px;border-radius:1.5px;background:#111a33;color:#fff;font-size:7.5px;line-height:12.5px;font-weight:bold;text-align:center;letter-spacing:-0.3px;overflow:hidden">Low</div>
<div class="t" style="left:1060px;top:611.15px;width:35px;height:12.5px;border-radius:1.5px;background:#111a33;color:#fff;font-size:7.5px;line-height:12.5px;font-weight:bold;text-align:center;letter-spacing:-0.3px;overflow:hidden">Pending</div>
<div class="t" style="left:1129.4px;top:603.94px;font-size:10.5px;line-height:10.5px;color:#282828;font-weight:normal;letter-spacing:-0.42px;">Feb 13. 2024</div>
<div class="t" style="left:1129.4px;top:619.44px;font-size:10.5px;line-height:10.5px;color:#282828;font-weight:normal;letter-spacing:-0.42px;">4.12 PM</div>
<svg style="left:1238.5px;top:611.25px" width="14" height="11" viewBox="0 0 14 11"><path d="M0.9 5.5 Q3.2 0.9 7 0.9 Q10.8 0.9 13.1 5.5 Q10.8 10.1 7 10.1 Q3.2 10.1 0.9 5.5Z" fill="none" stroke="#e9c25e" stroke-width="1.25"/><circle cx="7" cy="5.5" r="1.9" fill="none" stroke="#e9c25e" stroke-width="1.2"/></svg>
<svg style="left:1265px;top:610.25px" width="13" height="13" viewBox="0 0 13 13"><path d="M5.5 1.8 H2 Q1 1.8 1 2.8 V11 Q1 12 2 12 H10.2 Q11.2 12 11.2 11 V7.2" fill="none" stroke="#35a094" stroke-width="1.2" stroke-linecap="round"/><path d="M4.6 8.4 L5 6.3 L10.5 0.9 Q11.2 0.3 11.9 1 Q12.5 1.7 11.9 2.4 L6.5 7.9 Z" fill="none" stroke="#35a094" stroke-width="1.15" stroke-linejoin="round"/></svg>
<svg style="left:1290.3px;top:610.25px" width="12" height="13" viewBox="0 0 12 13"><path d="M0.6 2.6 H11.4" stroke="#d9626a" stroke-width="1.2"/><path d="M4 2.4 V1.4 Q4 0.7 4.7 0.7 H7.3 Q8 0.7 8 1.4 V2.4" fill="none" stroke="#d9626a" stroke-width="1.1"/><path d="M1.8 2.8 L2.4 11.4 Q2.5 12.3 3.4 12.3 H8.6 Q9.5 12.3 9.6 11.4 L10.2 2.8" fill="none" stroke="#d9626a" stroke-width="1.2"/><path d="M4.8 5.5 V9.5 M7.2 5.5 V9.5" stroke="#d9626a" stroke-width="1"/></svg>
<div class="abs" style="left:199px;top:640.0px;width:1138px;height:1px;background:#eaeced"></div>
<div class="t" style="left:217px;top:658.19px;font-size:10.5px;line-height:10.5px;color:#2b2b2b;font-weight:normal;letter-spacing:-0.65px;">#TCT-0009</div>
<div class="t" style="left:290px;top:658.19px;font-size:10.5px;line-height:10.5px;color:#282828;font-weight:normal;letter-spacing:-0.24px;">Testing Purpoae</div>
<div class="t" style="left:632.3px;top:658.19px;font-size:10.5px;line-height:10.5px;color:#282828;font-weight:normal;letter-spacing:-0.3px;">Soylent Corp</div>
<div class="t" style="left:731.7px;top:658.19px;font-size:10.5px;line-height:10.5px;color:#282828;font-weight:normal;letter-spacing:-0.27px;">Sales Inquiries</div>
<div class="t" style="left:849px;top:658.19px;font-size:10.5px;line-height:10.5px;color:#282828;font-weight:normal;letter-spacing:-0.27px;">-</div>
<div class="t" style="left:962px;top:657.65px;width:23px;height:12.5px;border-radius:1.5px;background:#f6c13a;color:#fff;font-size:7.5px;line-height:12.5px;font-weight:bold;text-align:center;letter-spacing:-0.3px;overflow:hidden">High</div>
<div class="t" style="left:1060px;top:657.65px;width:35px;height:12.5px;border-radius:1.5px;background:#111a33;color:#fff;font-size:7.5px;line-height:12.5px;font-weight:bold;text-align:center;letter-spacing:-0.3px;overflow:hidden">Pending</div>
<div class="t" style="left:1129.4px;top:650.44px;font-size:10.5px;line-height:10.5px;color:#282828;font-weight:normal;letter-spacing:-0.42px;">Mar 2, 2024</div>
<div class="t" style="left:1129.4px;top:665.94px;font-size:10.5px;line-height:10.5px;color:#282828;font-weight:normal;letter-spacing:-0.42px;">4.50 AM</div>
<svg style="left:1238.5px;top:657.75px" width="14" height="11" viewBox="0 0 14 11"><path d="M0.9 5.5 Q3.2 0.9 7 0.9 Q10.8 0.9 13.1 5.5 Q10.8 10.1 7 10.1 Q3.2 10.1 0.9 5.5Z" fill="none" stroke="#e9c25e" stroke-width="1.25"/><circle cx="7" cy="5.5" r="1.9" fill="none" stroke="#e9c25e" stroke-width="1.2"/></svg>
<svg style="left:1265px;top:656.75px" width="13" height="13" viewBox="0 0 13 13"><path d="M5.5 1.8 H2 Q1 1.8 1 2.8 V11 Q1 12 2 12 H10.2 Q11.2 12 11.2 11 V7.2" fill="none" stroke="#35a094" stroke-width="1.2" stroke-linecap="round"/><path d="M4.6 8.4 L5 6.3 L10.5 0.9 Q11.2 0.3 11.9 1 Q12.5 1.7 11.9 2.4 L6.5 7.9 Z" fill="none" stroke="#35a094" stroke-width="1.15" stroke-linejoin="round"/></svg>
<svg style="left:1290.3px;top:656.75px" width="12" height="13" viewBox="0 0 12 13"><path d="M0.6 2.6 H11.4" stroke="#d9626a" stroke-width="1.2"/><path d="M4 2.4 V1.4 Q4 0.7 4.7 0.7 H7.3 Q8 0.7 8 1.4 V2.4" fill="none" stroke="#d9626a" stroke-width="1.1"/><path d="M1.8 2.8 L2.4 11.4 Q2.5 12.3 3.4 12.3 H8.6 Q9.5 12.3 9.6 11.4 L10.2 2.8" fill="none" stroke="#d9626a" stroke-width="1.2"/><path d="M4.8 5.5 V9.5 M7.2 5.5 V9.5" stroke="#d9626a" stroke-width="1"/></svg>
<div class="abs" style="left:199px;top:686.5px;width:1138px;height:1px;background:#eaeced"></div>
<div class="abs" style="left:1363px;top:0;width:1px;height:768px;background:#ededed"></div>
<div class="t" style="left:203.8px;top:698.14px;font-size:10.5px;line-height:10.5px;color:#333;font-weight:normal;letter-spacing:-0.28px;">Showing 1 to 9 of 9 entries</div>
<div class="abs" style="left:1221.5px;top:697.3px;width:110px;height:25.2px;border-radius:4px;border:1px solid #e3e6e9;background:#fff"></div>
<div class="abs" style="left:1244.5px;top:698px;width:1px;height:23.5px;background:#eef0f2"></div>
<div class="abs" style="left:1308.5px;top:698px;width:1px;height:23.5px;background:#eef0f2"></div>
<div class="abs" style="left:1264.3px;top:697.3px;width:23.8px;height:25px;border-radius:2px;border:1.4px solid #36433f;background:#cbece5"></div>
<div class="t" style="left:1273.2px;top:703.70px;font-size:11px;line-height:11px;color:#1f8c7c;font-weight:normal;letter-spacing:0px;">1</div>
<svg style="left:1226px;top:704px" width="100" height="14"><path d="M7.5 3.5 L4.8 6.3 L7.5 9.1" fill="none" stroke="#8a8f94" stroke-width="1.3"/><path d="M5 3.6 V9" stroke="#8a8f94" stroke-width="0.9"/><path d="M30 3.4 L27.3 6.5 L30 9.6" fill="none" stroke="#8a8f94" stroke-width="1.1"/><path d="M70.4 3.4 L73.1 6.5 L70.4 9.6" fill="none" stroke="#c3c6c9" stroke-width="1.1"/><path d="M92.8 3.6 L96 6.5 L92.8 9.4 Z" fill="none" stroke="#c8cbce" stroke-width="1"/></svg>
</body></html>
